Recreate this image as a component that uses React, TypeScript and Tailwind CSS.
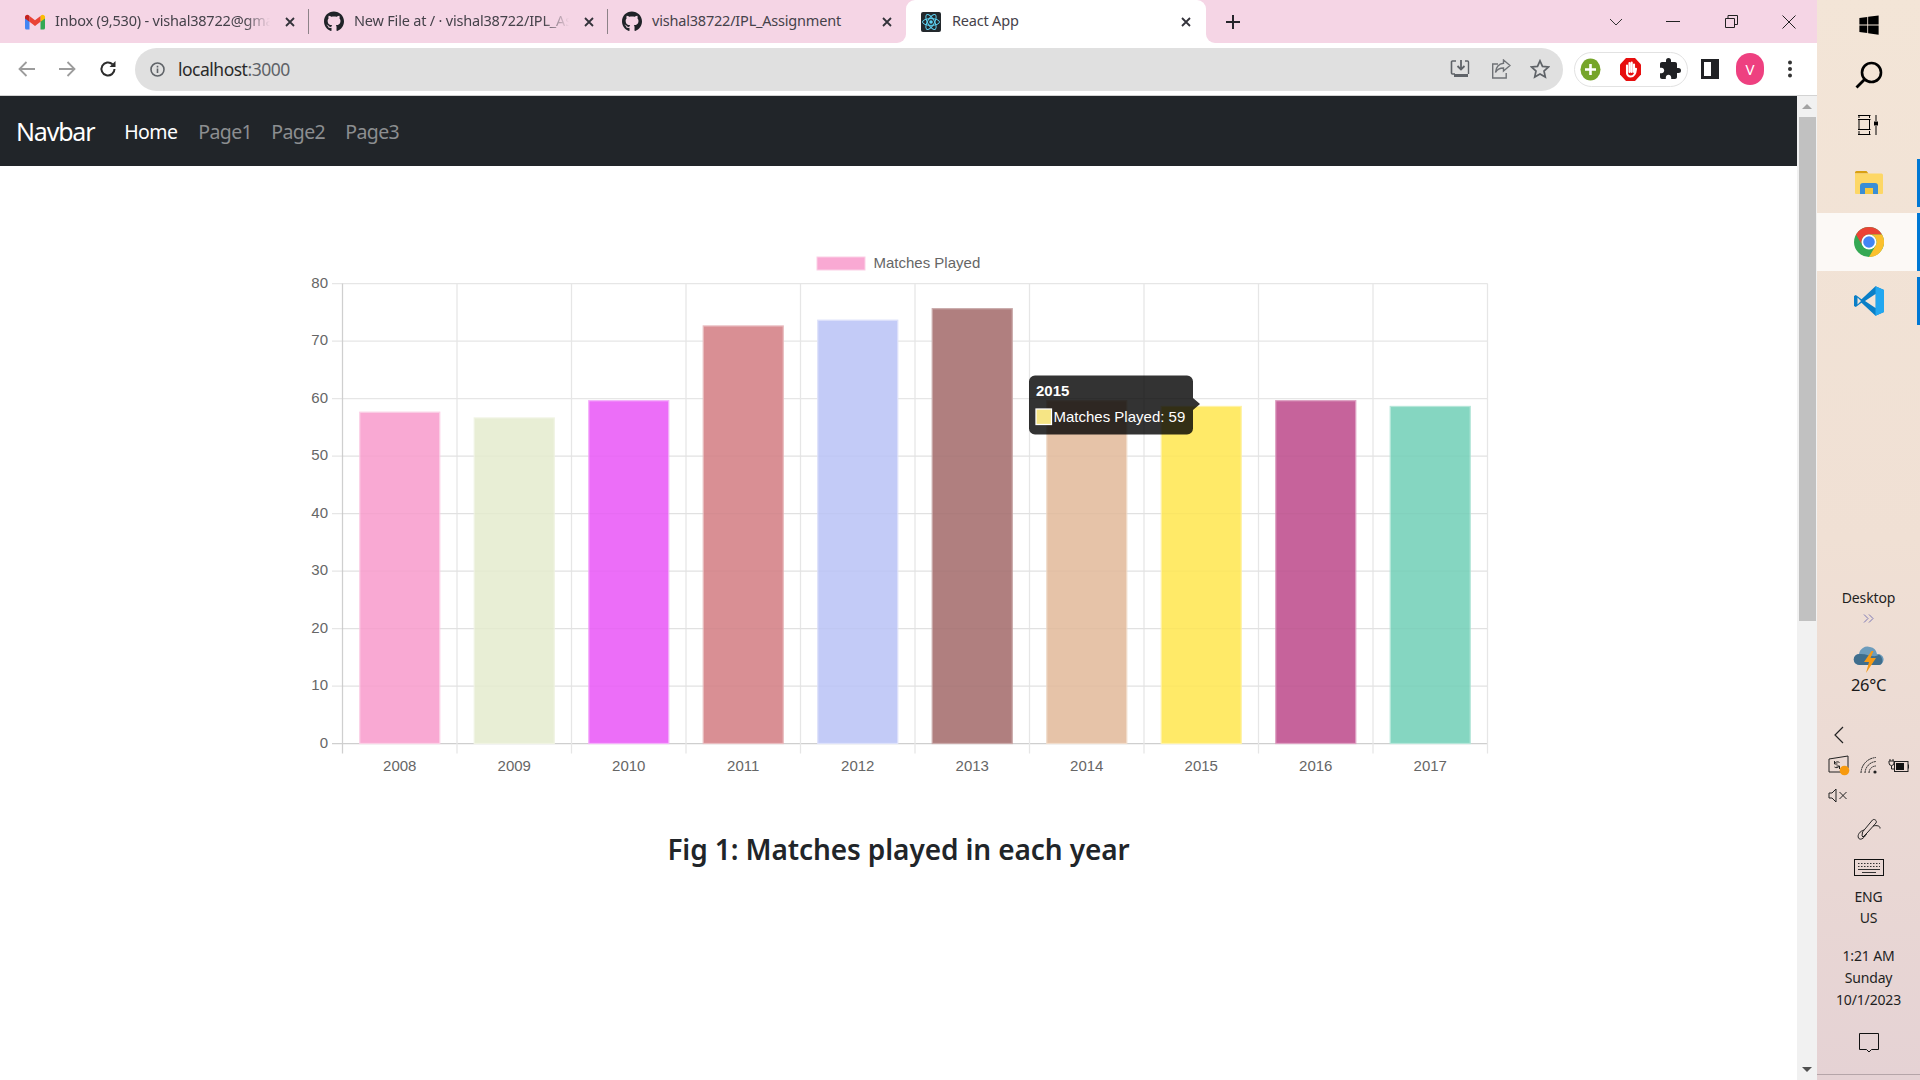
import React from "react";
import { MdExtension } from "react-icons/md";
import { FaGithub, FaWindows } from "react-icons/fa";

const years = [2008, 2009, 2010, 2011, 2012, 2013, 2014, 2015, 2016, 2017];
const values = [58, 57, 60, 73, 74, 76, 60, 59, 60, 59];
const colors = ["#f9a9d3", "#e8eed5", "#ec6ef8", "#d98f94", "#c3cbf7", "#b07f7f", "#e6c3a8", "#ffea68", "#c6639b", "#85d6c1"];
const borders = ["#fbd0e6", "#f0f3e3", "#f4b0fa", "#e8bcbf", "#dde1fa", "#c9a9a9", "#f0dccb", "#fff2a6", "#dda0c2", "#b5e6d9"];

const X0 = 342.5, DX = 114.5, Y0 = 743.5, DY = 5.75;

function Chart() {
  return (
    <svg viewBox="300 240 1200 550" className="block w-[1200px] h-[550px] ml-[300px] mt-[74px]" fontFamily="'Liberation Sans', Arial, sans-serif">
      <rect x="817" y="257" width="48" height="13" fill="#f9a9d3" stroke="#fbd0e6" />
      <text x="873.5" y="268" fontSize="15" fill="#666">Matches Played</text>
      {[0, 10, 20, 30, 40, 50, 60, 70, 80].map((v) => {
        const y = Y0 - v * DY;
        return (
          <g key={v}>
            <line x1={332} x2={1487.5} y1={y} y2={y} stroke={v === 0 ? "#cfcfcf" : "#e6e6e6"} strokeWidth="1.25" />
            <text x="328" y={y + 4} fontSize="15" fill="#666" textAnchor="end">{v}</text>
          </g>
        );
      })}
      {Array.from({ length: 11 }).map((_, i) => {
        const x = X0 + i * DX;
        return <line key={i} x1={x} x2={x} y1={283.5} y2={753.5} stroke={i === 0 ? "#cfcfcf" : "#e6e6e6"} strokeWidth="1.25" />;
      })}
      {values.map((v, i) => {
        const cx = X0 + (i + 0.5) * DX;
        const top = Y0 - v * DY + 2.2;
        return (
          <g key={i}>
            <rect x={cx - 40} y={top} width="80" height={Y0 - top} fill={colors[i]} stroke={borders[i]} strokeWidth="1.25" />
            <text x={cx} y={771} fontSize="15" fill="#666" textAnchor="middle">{years[i]}</text>
          </g>
        );
      })}
      {[10, 20, 30, 40, 50].map((v) => (
        <line key={v} x1={342} x2={1487} y1={Y0 - v * DY} y2={Y0 - v * DY} stroke="#000" strokeOpacity="0.02" strokeWidth="1.25" />
      ))}
      <path d="M1035 375.500h152a6 6 0 0 1 6 6v16.500l7 6-7 6v18.500a6 6 0 0 1-6 6h-152a6 6 0 0 1-6-6v-47a6 6 0 0 1 6-6z" fill="#000" fillOpacity="0.8" />
      <text x="1036" y="396" fontSize="15" fontWeight="700" fill="#fff">2015</text>
      <rect x="1036" y="409" width="15.5" height="15.5" fill="#f6e585" stroke="#fff" strokeWidth="1.25" />
      <text x="1053.500" y="421.500" fontSize="15" fill="#fff">Matches Played: 59</text>
    </svg>
  );
}

function XIcon({ size = 10, w = 1.8 }: { size?: number; w?: number }) {
  return (
    <svg width={size} height={size} viewBox="0 0 10 10" className="shrink-0">
      <path d="M1 1l8 8M9 1l-8 8" stroke="#33323a" strokeWidth={w} fill="none" />
    </svg>
  );
}

function GmailIcon() {
  return (
    <svg width="20" height="16" viewBox="0 0 20 16" className="shrink-0">
      <path d="M0 3v11a1.500 1.500 0 0 0 1.500 1.500H4.500V7z" fill="#4285f4" />
      <path d="M20 3v11a1.500 1.500 0 0 1-1.500 1.500H15.500V7z" fill="#34a853" />
      <path d="M15.500 2v5.800L20 4.500V3c0-2-2.300-3-3.800-1.800z" fill="#fbbc04" />
      <path d="M4.500 7.800V2L10 6.200 15.500 2v5.800L10 12z" fill="#ea4335" />
      <path d="M0 3v1.500l4.500 3.300V2L3.800 1.200C2.300 0 0 1 0 3z" fill="#c5221f" />
    </svg>
  );
}

function ReactFavicon() {
  return (
    <svg width="20" height="20" viewBox="0 0 20 20" className="shrink-0">
      <rect width="20" height="20" rx="2" fill="#23292d" />
      <g stroke="#5ed3f3" strokeWidth="1" fill="none">
        <ellipse cx="10" cy="10" rx="8.500" ry="3.400" />
        <ellipse cx="10" cy="10" rx="8.500" ry="3.400" transform="rotate(60 10 10)" />
        <ellipse cx="10" cy="10" rx="8.500" ry="3.400" transform="rotate(120 10 10)" />
      </g>
      <circle cx="10" cy="10" r="1.800" fill="#5ed3f3" />
    </svg>
  );
}

function TabDivider() {
  return <div className="w-px h-[25px] bg-[#8d8288] shrink-0" />;
}

function Tab({ icon, title, textW, closeGap, width, pl, fade = true }: { icon: React.ReactNode; title: string; textW: number; closeGap: string; width: string; pl: string; fade?: boolean }) {
  return (
    <div className={`flex items-center h-full shrink-0 ${width} ${pl}`}>
      <div className="w-[20px] flex justify-center shrink-0">{icon}</div>
      <div className={`ml-[10px] pb-[2px] whitespace-nowrap text-[14.5px] text-[#45424a] tracking-[-0.2px] ${fade ? "overflow-hidden [mask-image:linear-gradient(to_right,black_88%,transparent)]" : ""}`} style={{ width: textW }}>
        {title}
      </div>
      <div className={closeGap}><XIcon /></div>
    </div>
  );
}

function TabStrip() {
  return (
    <div className="h-[43px] bg-[#f5d5e5] flex items-center shrink-0 relative">
      <Tab width="w-[308px]" pl="pl-[25px]" closeGap="ml-[15px]" textW={215} icon={<GmailIcon />} title="Inbox (9,530) - vishal38722@gmail.com" />
      <TabDivider />
      <Tab width="w-[298px]" pl="pl-[15px]" closeGap="ml-[15px]" textW={215} icon={<FaGithub size={21} color="#1f2328" />} title="New File at / · vishal38722/IPL_Assignment" />
      <TabDivider />
      <Tab width="w-[298px]" pl="pl-[14px]" closeGap="ml-[40px]" textW={190} fade={false} icon={<FaGithub size={21} color="#1f2328" />} title="vishal38722/IPL_Assignment" />
      <div className="relative flex items-center w-[300px] h-full bg-white rounded-t-[9px] pl-[15px] shrink-0">
        <div className="absolute -left-[9px] bottom-0 w-[9px] h-[9px] bg-white">
          <div className="w-full h-full bg-[#f5d5e5] rounded-br-[9px]" />
        </div>
        <div className="absolute -right-[9px] bottom-0 w-[9px] h-[9px] bg-white">
          <div className="w-full h-full bg-[#f5d5e5] rounded-bl-[9px]" />
        </div>
        <ReactFavicon />
        <div className="ml-[11px] pb-[2px] w-[229px] text-[14.5px] text-[#45424a] tracking-[-0.2px] whitespace-nowrap">React App</div>
        <XIcon />
      </div>
      <svg width="16" height="16" viewBox="0 0 16 16" className="ml-[19px] shrink-0">
        <path d="M8 1v14M1 8h14" stroke="#26252b" strokeWidth="2" />
      </svg>
      <div className="ml-auto flex items-center h-full pr-[21px]">
        <svg width="14" height="8" viewBox="0 0 14 8" className="mr-[43px]"><path d="M1 1l6 6 6-6" stroke="#333" fill="none" /></svg>
        <div className="w-[14px] h-px bg-[#222] mr-[45px]" />
        <svg width="13" height="13" viewBox="0 0 13 13" className="mr-[44px]"><path d="M.5 3.500h9v9h-9zM3 3.500V.5h9.500v9h-3" stroke="#222" fill="none" /></svg>
        <svg width="14" height="14" viewBox="0 0 14 14"><path d="M.5.500l13 13M13.500.500l-13 13" stroke="#222" fill="none" /></svg>
      </div>
    </div>
  );
}

function Toolbar() {
  return (
    <div className="h-[53px] bg-white border-b border-[#d3d3d3] flex items-center shrink-0">
      <svg width="20" height="18" viewBox="0 0 20 18" className="ml-[17px]"><path d="M18 9H3M9.500 2L2.500 9l7 7" stroke="#9c9c9c" strokeWidth="1.800" fill="none" /></svg>
      <svg width="20" height="18" viewBox="0 0 20 18" className="ml-[20px]"><path d="M2 9h15M10.500 2l7 7-7 7" stroke="#9c9c9c" strokeWidth="1.800" fill="none" /></svg>
      <svg width="18" height="18" viewBox="0 0 18 18" className="ml-[22px]"><path d="M15.500 9a6.500 6.500 0 1 1-2-4.700" stroke="#2c2c2c" strokeWidth="2" fill="none" /><path d="M16.500 1v6h-6z" fill="#2c2c2c" /></svg>
      <div className="ml-[18px] w-[1428px] h-[43px] rounded-full bg-[#e0e0e0] flex items-center pl-[15px]">
        <svg width="15" height="15" viewBox="0 0 15 15"><circle cx="7.500" cy="7.500" r="6.500" stroke="#5f6368" strokeWidth="1.600" fill="none" /><path d="M7.500 6.500v4.500M7.500 3.800v1.600" stroke="#5f6368" strokeWidth="1.600" /></svg>
        <div className="ml-[13px] text-[17.5px] tracking-[-0.5px] whitespace-nowrap text-[#2a2a2a]">localhost<span className="text-[#5f6368]">:3000</span></div>
        <svg width="20" height="20" viewBox="0 0 20 20" className="ml-auto"><path d="M6 2H2.500a1 1 0 0 0-1 1v11a1 1 0 0 0 1 1H5" stroke="#5f6368" strokeWidth="1.600" fill="none" /><path d="M11 1v9M7.500 7L11 10.500 14.500 7" stroke="#5f6368" strokeWidth="1.800" fill="none" /><path d="M4 15h14v3H4z" fill="#5f6368" /><path d="M15 2h2.500a1 1 0 0 1 1 1v12" stroke="#5f6368" strokeWidth="1.400" fill="none" /></svg>
        <svg width="20" height="20" viewBox="0 0 20 20" className="ml-[21px]"><path d="M7 5H1.700v14h13.500v-5" stroke="#6f7276" strokeWidth="1.400" fill="none" /><path d="M12.500 1l6.500 5.500-6.500 5.500V9c-4 0-6.500 1.500-8 4.500C5 8.500 8 4.800 12.500 4.300z" stroke="#6f7276" strokeWidth="1.400" fill="none" /></svg>
        <svg width="20" height="20" viewBox="0 0 20 20" className="ml-[19px] mr-[13px]"><path d="M10 1.800l2.500 5.600 6 .6-4.500 4 1.300 6L10 15l-5.300 3 1.300-6-4.500-4 6-.6z" stroke="#5f6368" strokeWidth="1.700" fill="none" /></svg>
      </div>
      <div className="ml-[11px] w-[114px] h-[35px] rounded-full border border-[#e2e2e2] flex items-center pl-[5px]">
        <svg width="21" height="23" viewBox="0 0 21 23"><ellipse cx="10.500" cy="11.500" rx="10" ry="11" fill="#76a52a" /><path d="M10.500 6v11M5 11.500h11" stroke="#fff" strokeWidth="2.600" /></svg>
        <svg width="21" height="23" viewBox="0 0 21 23" className="ml-[19px]"><path d="M6 0h9l6 6.500v10L15 23H6l-6-6.500v-10z" fill="#e70f0f" /><path d="M7 15V7.500M9.500 14V5M11.700 14V4.500M14 14V6.500M14.200 12.500c0-1 1.300-1.800 1.800-1.500-.3 3-1.300 7.500-5.300 7.500-2.500 0-3.700-2-3.700-3.500" stroke="#fff" strokeWidth="2.100" strokeLinecap="round" fill="none" /></svg>
        <div className="ml-[17px]"><MdExtension size={24} color="#202124" /></div>
      </div>
      <svg width="18" height="20" viewBox="0 0 18 20" className="ml-[13px]"><path d="M0 0h18v20H0z" fill="#202124" /><path d="M3 3h7v14H3z" fill="#fff" /></svg>
      <div className="ml-[17px] w-[28px] h-[32px] rounded-full bg-[#ee4080] text-white flex items-center justify-center text-[15px]">V</div>
      <svg width="6" height="18" viewBox="0 0 6 18" className="ml-[23px]"><circle cx="3" cy="2.500" r="2" fill="#333" /><circle cx="3" cy="9" r="2" fill="#333" /><circle cx="3" cy="15.500" r="2" fill="#333" /></svg>
    </div>
  );
}

function Navbar() {
  return (
    <nav className="h-[70px] bg-[#212529] flex items-center shrink-0 pl-[16px] pt-[2px]">
      <div className="text-[25px] text-white tracking-[-1.2px]">Navbar</div>
      <div className="ml-[30px] text-[19.5px] text-white tracking-[-0.6px] w-[74px]">Home</div>
      <div className="text-[19.5px] text-[#8c8e90] tracking-[-0.6px] w-[73px]">Page1</div>
      <div className="text-[19.5px] text-[#8c8e90] tracking-[-0.6px] w-[74px]">Page2</div>
      <div className="text-[19.5px] text-[#8c8e90] tracking-[-0.6px]">Page3</div>
    </nav>
  );
}

function Scrollbar() {
  return (
    <div className="w-[20px] bg-[#f1f1f1] flex flex-col items-center shrink-0">
      <div className="h-[21px] flex items-center justify-center shrink-0">
        <div className="w-0 h-0 border-x-[5px] border-x-transparent border-b-[5px] border-b-[#a3a3a3]" />
      </div>
      <div className="h-[504px] w-[17px] ml-[1px] bg-[#c1c1c1] shrink-0" />
      <div className="mt-auto h-[21px] flex items-center justify-center">
        <div className="w-0 h-0 border-x-[5px] border-x-transparent border-t-[5px] border-t-[#505050]" />
      </div>
    </div>
  );
}

function ChromeLogo() {
  return (
    <svg width="30" height="30" viewBox="0 0 30 30">
      <circle cx="15" cy="15" r="15" fill="#34a853" />
      <path d="M15 0A15 15 0 0 1 28 7.500H15A7.500 7.500 0 0 0 8.500 18.750L2 7.500A15 15 0 0 1 15 0z" fill="#ea4335" />
      <path d="M28 7.500A15 15 0 0 1 15 30l6.500-11.250A7.500 7.500 0 0 0 15 7.500z" fill="#fbc02d" />
      <circle cx="15" cy="15" r="7.500" fill="#fff" />
      <circle cx="15" cy="15" r="5.800" fill="#4285f4" />
    </svg>
  );
}

function VSCodeLogo() {
  return (
    <svg width="30" height="30" viewBox="0 0 30 30">
      <path d="M21.500 0.300 30 4v22l-8.500 3.700-14-13L1.800 21 0 20V10l1.800-1 5.700 4.300z" fill="#0a7fc7" />
      <path d="M21.500 0.300 30 4v22l-8.500 3.700z" fill="#22a7f0" />
      <path d="M21.500 8 11 15l10.500 7z" fill="#f3e5d8" />
      <path d="M3.500 11.500 7 15l-3.500 3.500z" fill="#f3e5d8" />
    </svg>
  );
}

function ExplorerIcon() {
  return (
    <svg width="28" height="24" viewBox="0 0 28 24">
      <path d="M0 1.500A1.500 1.500 0 0 1 1.500 0h10l2 2.500H0z" fill="#d9a012" />
      <path d="M0 2.500h26.500A1.500 1.500 0 0 1 28 4v18a1 1 0 0 1-1 1H1a1 1 0 0 1-1-1z" fill="#fdd766" />
      <path d="M5 23v-8a3 3 0 0 1 3-3h12a3 3 0 0 1 3 3v8h-5v-6h-8v6z" fill="#3a8ed6" />
      <path d="M10 17h8v6h-8z" fill="#f6c83e" />
    </svg>
  );
}

function TrayText({ children, className = "" }: { children: React.ReactNode; className?: string }) {
  return <div className={`text-[14px] leading-[20px] text-[#1f1f1f] tracking-[-0.15px] text-center whitespace-nowrap ${className}`}>{children}</div>;
}

function Taskbar() {
  return (
    <aside className="w-[103px] flex flex-col items-stretch bg-gradient-to-b from-[#f3e5d7] via-[#f0e0d4] to-[#e5d2d4]">
      <div className="h-[50px] flex items-center justify-center">
        <FaWindows size={22} color="#000" />
      </div>
      <div className="h-[50px] flex items-center justify-center">
        <svg width="28" height="28" viewBox="0 0 28 28"><circle cx="16.500" cy="11.500" r="9.500" stroke="#000" strokeWidth="2.600" fill="none" /><path d="M9.500 18.500l-8 8" stroke="#000" strokeWidth="2.800" /></svg>
      </div>
      <div className="h-[50px] flex items-center justify-center">
        <svg width="21" height="20" viewBox="0 0 21 20"><path d="M0 .500h12.500M0 4.500h12.500M1 4.500v10M11.500 4.500v10M0 14.500h12.500M0 19.500h12.500M1 0v3M11.500 0v3M1 16v4M11.500 16v4M18 0v6M18 11v9" stroke="#000" fill="none" /><rect x="16" y="6.500" width="4" height="4" fill="#000" /></svg>
      </div>
      <div className="relative mt-[4px] h-[59px] pb-[2px] flex items-center justify-center">
        <ExplorerIcon />
        <div className="absolute right-0 top-[5px] w-[3px] h-[48px] bg-[#0078d4]" />
      </div>
      <div className="relative h-[58px] flex items-center justify-center bg-[#fcf9f6]">
        <ChromeLogo />
        <div className="absolute right-0 top-0 w-[3px] h-full bg-[#0078d4]" />
      </div>
      <div className="relative h-[60px] flex items-center justify-center">
        <VSCodeLogo />
        <div className="absolute right-0 top-[6px] w-[3px] h-[48px] bg-[#0078d4]" />
      </div>
      <TrayText className="mt-[257px]">Desktop</TrayText>
      <div className="h-[20px] flex items-center justify-center">
        <svg width="11" height="9" viewBox="0 0 11 9"><path d="M1 .500l4 4-4 4M6 .500l4 4-4 4" stroke="#7b77b5" fill="none" /></svg>
      </div>
      <div className="mt-[16px] h-[30px] flex items-center justify-center">
        <svg width="32" height="28" viewBox="0 0 32 28">
          <path d="M6.500 20a5.500 5.500 0 0 1-.5-11 8.500 8.500 0 0 1 11-7 8.500 8.500 0 0 1 7 7 5.500 5.500 0 0 1 2 11z" fill="#6d9cbc" />
          <path d="M6.500 20a5.500 5.500 0 0 1-.5-11c8-1 15 5 20 0.500 5 4 4 10.500 0 10.500z" fill="#3f6e8d" />
          <path d="M18.500 6 11 17h5l-3 11 10-15h-5.500l3-7z" fill="#f59a16" />
        </svg>
      </div>
      <div className="mt-[1px] text-[16.5px] leading-[20px] text-center text-[#1a1a1a] tracking-[-0.3px]">26°C</div>
      <div className="mt-[30px] h-[20px] flex items-center pl-[16px]">
        <svg width="11" height="18" viewBox="0 0 11 18"><path d="M10 1L2 9l8 8" stroke="#222" strokeWidth="1.200" fill="none" /></svg>
      </div>
      <div className="mt-[10px] h-[20px] flex items-center justify-between pl-[11px] pr-[11px]">
        <svg width="22" height="21" viewBox="0 0 22 21"><path d="M1 4L20 1v12M1 4v13h12" stroke="#222" fill="none" /><path d="M11.500 7.500a3.500 3.500 0 0 0-5 1M6.500 6v3H9.500M6.500 12a3.500 3.500 0 0 0 5-1M11.500 14v-3H8.500" stroke="#222" fill="none" /><circle cx="16.500" cy="15.500" r="4.800" fill="#f79a0e" /></svg>
        <svg width="18" height="18" viewBox="0 0 18 18"><path d="M1 17A16 16 0 0 1 16 1.500M5 17A12 12 0 0 1 16 5.500M9 17a7 7 0 0 1 7-7" stroke="#222" strokeDasharray="2 0.500" fill="none" /><circle cx="15" cy="16" r="1.600" fill="#222" /></svg>
        <svg width="21" height="15" viewBox="0 0 21 15"><rect x="6.500" y="3.500" width="13.500" height="10" stroke="#222" fill="none" /><path d="M20.500 6.500v4" stroke="#222" /><rect x="8" y="5" width="8" height="7" fill="#111" /><path d="M2 1v2M5 1v2M1 3h5v2a2.500 2.500 0 0 1-5 0zM3.500 8v3h3" stroke="#222" fill="none" /></svg>
      </div>
      <div className="mt-[10px] h-[20px] flex items-center pl-[11px]">
        <svg width="20" height="15" viewBox="0 0 20 15"><path d="M1 5h3l4-4v13l-4-4H1zM11.500 4l7 7M18.500 4l-7 7" stroke="#222" fill="none" /></svg>
      </div>
      <div className="mt-[14px] h-[20px] flex items-center justify-center">
        <svg width="24" height="23" viewBox="0 0 24 23"><path d="M10 15l-4 4-1-1 .5-4L15.500 2c1.500-1.500 5 .5 3.500 3z" stroke="#222" fill="none" /><path d="M7 12c-4 1-7 5-5.500 8 1.500 2.500 5 1 8-4M16 8c4-1 7.500 0 7 2.500" stroke="#222" fill="none" /></svg>
      </div>
      <div className="mt-[16px] h-[24px] flex items-center justify-center">
        <svg width="30" height="17" viewBox="0 0 30 17"><rect x=".5" y=".5" width="29" height="16" stroke="#111" fill="none" /><path d="M4 4.500h22M4 7.500h22" stroke="#333" strokeDasharray="1.500 1.500" /><path d="M4 10.500h22M8 13.500h14" stroke="#333" /></svg>
      </div>
      <TrayText className="mt-[8px]">ENG</TrayText>
      <TrayText className="mt-[1px]">US</TrayText>
      <TrayText className="mt-[18px]">1:21 AM</TrayText>
      <TrayText className="mt-[2px]">Sunday</TrayText>
      <TrayText className="mt-[2px]">10/1/2023</TrayText>
      <div className="mt-[21px] h-[24px] flex items-center justify-center">
        <svg width="20" height="20" viewBox="0 0 20 20"><path d="M.5.500h19v16h-7L10 19l-2.500-2.500h-7z" stroke="#111" fill="none" /></svg>
      </div>
      <div className="mt-[19px] h-px bg-[#b5a5a8]" />
    </aside>
  );
}

export default function App() {
  return (
    <div className="w-[1920px] h-[1080px] flex overflow-hidden bg-white" style={{ fontFamily: "'Noto Sans', 'Open Sans', sans-serif" }}>
      <div className="w-[1817px] flex flex-col shrink-0">
        <TabStrip />
        <Toolbar />
        <div className="flex-1 flex min-h-0">
          <main className="flex-1 flex flex-col min-w-0">
            <Navbar />
            <Chart />
            <h3 className="mt-[35px] text-center text-[28px] leading-[48px] font-semibold text-[#212529] tracking-[-0.1px]">Fig 1: Matches played in each year</h3>
          </main>
          <Scrollbar />
        </div>
      </div>
      <Taskbar />
    </div>
  );
}
